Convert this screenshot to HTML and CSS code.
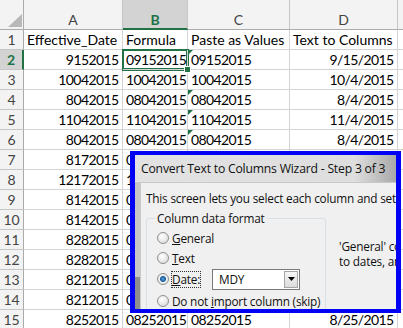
FILE: index.html
```html
<!DOCTYPE html>
<html lang="en">
<head>
    <meta charset="UTF-8">
    <title>Text to Columns</title>
    <link rel="stylesheet" href="styles.css">
</head>
<body>
    <div class="screen">
        <div class="sheet">
            <div class="hd corner"><svg width="14" height="13" viewBox="0 0 14 13"><polygon points="14,0 14,13 0,13" fill="#b8b8b8"/></svg></div>
            <div class="hd col">A</div>
            <div class="hd col sel-col">B</div>
            <div class="hd col">C</div>
            <div class="hd col">D</div>
            <div class="hd col"></div>

            <div class="hd row">1</div>
            <div class="c t">Effective_Date</div>
            <div class="c t">Formula</div>
            <div class="c t">Paste as Values</div>
            <div class="c t">Text to Columns</div>
            <div class="c"></div>

            <div class="hd row sel-row">2</div>
            <div class="c r">9152015</div>
            <div class="c active">09152015<span class="handle"></span></div>
            <div class="c flag">09152015</div>
            <div class="c r">9/15/2015</div>
            <div class="c"></div>

            <div class="hd row">3</div>
            <div class="c r">10042015</div>
            <div class="c">10042015</div>
            <div class="c">10042015</div>
            <div class="c r">10/4/2015</div>
            <div class="c"></div>

            <div class="hd row">4</div>
            <div class="c r">8042015</div>
            <div class="c">08042015</div>
            <div class="c flag">08042015</div>
            <div class="c r">8/4/2015</div>
            <div class="c"></div>

            <div class="hd row">5</div>
            <div class="c r">11042015</div>
            <div class="c">11042015</div>
            <div class="c flag">11042015</div>
            <div class="c r">11/4/2015</div>
            <div class="c"></div>

            <div class="hd row">6</div>
            <div class="c r">8042015</div>
            <div class="c">08042015</div>
            <div class="c flag">08042015</div>
            <div class="c r">8/4/2015</div>
            <div class="c"></div>

            <div class="hd row">7</div>
            <div class="c r">8172015</div>
            <div class="c">08172015</div>
            <div class="c">08172015</div>
            <div class="c r">8/17/2015</div>
            <div class="c"></div>

            <div class="hd row">8</div>
            <div class="c r">12172015</div>
            <div class="c">12172015</div>
            <div class="c">12172015</div>
            <div class="c r">12/17/2015</div>
            <div class="c"></div>

            <div class="hd row">9</div>
            <div class="c r">8142015</div>
            <div class="c">08142015</div>
            <div class="c">08142015</div>
            <div class="c r">8/14/2015</div>
            <div class="c"></div>

            <div class="hd row">10</div>
            <div class="c r">8142015</div>
            <div class="c">08142015</div>
            <div class="c">08142015</div>
            <div class="c r">8/14/2015</div>
            <div class="c"></div>

            <div class="hd row">11</div>
            <div class="c r">8282015</div>
            <div class="c">08282015</div>
            <div class="c">08282015</div>
            <div class="c r">8/28/2015</div>
            <div class="c"></div>

            <div class="hd row">12</div>
            <div class="c r">8282015</div>
            <div class="c">08282015</div>
            <div class="c">08282015</div>
            <div class="c r">8/28/2015</div>
            <div class="c"></div>

            <div class="hd row">13</div>
            <div class="c r">8212015</div>
            <div class="c">08212015</div>
            <div class="c">08212015</div>
            <div class="c r">8/21/2015</div>
            <div class="c"></div>

            <div class="hd row">14</div>
            <div class="c r">8212015</div>
            <div class="c">08212015</div>
            <div class="c">08212015</div>
            <div class="c r">8/21/2015</div>
            <div class="c"></div>

            <div class="hd row">15</div>
            <div class="c r">8252015</div>
            <div class="c">08252015</div>
            <div class="c">08252015</div>
            <div class="c r">8/25/2015</div>
            <div class="c"></div>
        </div>

        <div class="dialog">
            <div class="titlebar">Convert Text to Columns Wizard - Step 3 of 3</div>
            <div class="frame">
                <div class="panel">
                    <p class="intro">This screen lets you select each column and set the Data Format.</p>
                    <div class="options">
                        <fieldset class="group">
                            <legend>Column data format</legend>
                            <div class="opt"><span class="radio"></span><span><u>G</u>eneral</span></div>
                            <div class="opt"><span class="radio"></span><span><u>T</u>ext</span></div>
                            <div class="opt opt-date">
                                <span class="radio on"></span>
                                <span class="focus"><u>D</u>ate:</span>
                                <div class="select">
                                    <span>MDY</span>
                                    <span class="drop"><svg width="7" height="4" viewBox="0 0 7 4"><polygon points="0,0 7,0 3.5,4" fill="#000"/></svg></span>
                                </div>
                            </div>
                            <div class="opt"><span class="radio"></span><span>Do not <u>i</u>mport column (skip)</span></div>
                        </fieldset>
                        <p class="note">'General' converts numeric values to numbers, date values<br>to dates, and all remaining values to text.</p>
                    </div>
                </div>
            </div>
        </div>
    </div>
</body>
</html>
```

FILE: styles.css
```css
body {
    margin: 0;
    background-color: #ffffff;
    overflow: hidden;
}
.screen {
    position: relative;
    width: 403px;
    height: 328px;
    overflow: hidden;
}
.sheet {
    display: grid;
    grid-template-columns: 24px 99px 65px 102px 108px 40px;
    grid-auto-rows: 20px;
    grid-template-rows: 30px;
    font-family: 'Lato', sans-serif;
    font-size: 14px;
    color: #000;
}
.c {
    position: relative;
    box-sizing: border-box;
    border-right: 1px solid #d4d4d4;
    border-bottom: 1px solid #d4d4d4;
    padding: 0 3px;
    line-height: 19px;
    letter-spacing: -0.6px;
    white-space: nowrap;
    overflow: hidden;
}
.t {
    letter-spacing: 0;
}
.r {
    text-align: right;
    padding-right: 3.5px;
}
.hd {
    box-sizing: border-box;
    background-color: #f3f3f3;
    color: #444;
    border-right: 1px solid #c6c6c6;
    border-bottom: 1px solid #c6c6c6;
    display: flex;
    justify-content: center;
}
.col {
    align-items: flex-start;
    padding-top: 11px;
    line-height: 18px;
    border-bottom-color: #ababab;
}
.row {
    align-items: center;
    line-height: 19px;
    border-right-color: #ababab;
}
.corner {
    align-items: flex-end;
    justify-content: flex-end;
    padding: 0 1px 2px 0;
    border-bottom-color: #ababab;
    border-right-color: #ababab;
}
.sel-col {
    background-color: #d3d3d3;
    color: #217346;
    font-weight: bold;
    border-bottom: 2px solid #217346;
}
.sel-row {
    background-color: #d3d3d3;
    color: #217346;
    font-weight: bold;
    border-right: 2px solid #217346;
}
.active {
    overflow: visible;
    z-index: 2;
    box-shadow: 0 0 0 1px #217346, inset 0 0 0 1px #217346;
}
.handle {
    position: absolute;
    right: -4px;
    bottom: -4px;
    width: 5px;
    height: 5px;
    background-color: #217346;
    border: 1px solid #fff;
}
.flag::before {
    content: "";
    position: absolute;
    left: 0;
    top: 0;
    border-top: 5px solid #1e7145;
    border-right: 5px solid transparent;
}

/* wizard dialog lying over the sheet */
.dialog {
    position: absolute;
    left: 130px;
    top: 151px;
    width: 271px;
    height: 162px;
    box-sizing: border-box;
    border: 5px solid #0000f5;
    border-top-width: 4px;
    border-bottom-width: 4px;
    background-color: #f0f0f0;
    font-family: 'Open Sans', sans-serif;
    font-size: 11.8px;
    letter-spacing: -0.2px;
    color: #111;
    overflow: hidden;
    display: flex;
    flex-direction: column;
}
.titlebar {
    height: 27px;
    flex-shrink: 0;
    padding-left: 6px;
    line-height: 27px;
    font-size: 12.2px;
    white-space: nowrap;
    background: linear-gradient(to right, #e2e2e2 0%, #dedede 84%, #a9a9a9 100%);
}
.frame {
    flex: 1;
    display: flex;
    background-color: #dcdcdc;
    border-left: 5px solid #b8b8b8;
    border-image: linear-gradient(to bottom, #c6c6c6 0%, #c6c6c6 72%, #8e8e8e 72%, #8e8e8e 100%) 1;
}
.panel {
    flex: 1;
    background-color: #f0f0f0;
    border-top: 1px solid #c8c8c8;
    border-left: 1px solid #c8c8c8;
    padding: 7px 0 0 5px;
    white-space: nowrap;
    overflow: hidden;
}
.intro {
    margin: 0;
    line-height: 16px;
}
.options {
    display: flex;
    align-items: flex-start;
    margin-top: 4px;
}
.group {
    width: 180px;
    height: 104px;
    box-sizing: border-box;
    margin: 0;
    padding: 2px 0 0 10px;
    border: 1px solid #d5dfe5;
    border-radius: 3px;
    flex-shrink: 0;
}
.group legend {
    padding: 0 2px;
    margin-left: -2px;
    line-height: 16px;
}
.opt {
    display: flex;
    align-items: center;
    gap: 3px;
    height: 20px;
}
.opt-date {
    height: 22px;
    margin: 0 0 1px 0;
}
.radio {
    width: 10px;
    height: 10px;
    border-radius: 50%;
    border: 1px solid #8e8f8f;
    background: radial-gradient(circle at 40% 35%, #ffffff 0%, #e6e6e6 60%, #cfcfcf 100%);
    flex-shrink: 0;
}
.radio.on {
    background: radial-gradient(circle, #5aa4dc 0%, #1d5b9a 38%, #f4f4f4 46%, #dcdcdc 100%);
}
.focus {
    outline: 1px dotted #333;
    line-height: 15px;
}
.select {
    display: flex;
    align-items: center;
    justify-content: space-between;
    width: 88px;
    height: 21px;
    box-sizing: border-box;
    margin-left: 9px;
    padding-left: 6px;
    border: 1px solid #7a7a7a;
    background-color: #fff;
}
.drop {
    display: flex;
    align-items: center;
    justify-content: center;
    width: 12px;
    height: 15px;
    margin-right: 1px;
    border: 1px solid #a6a6a6;
    background: linear-gradient(#f6f6f6, #dcdcdc);
}
.note {
    margin: 29px 0 0 13px;
    line-height: 15px;
}
```
